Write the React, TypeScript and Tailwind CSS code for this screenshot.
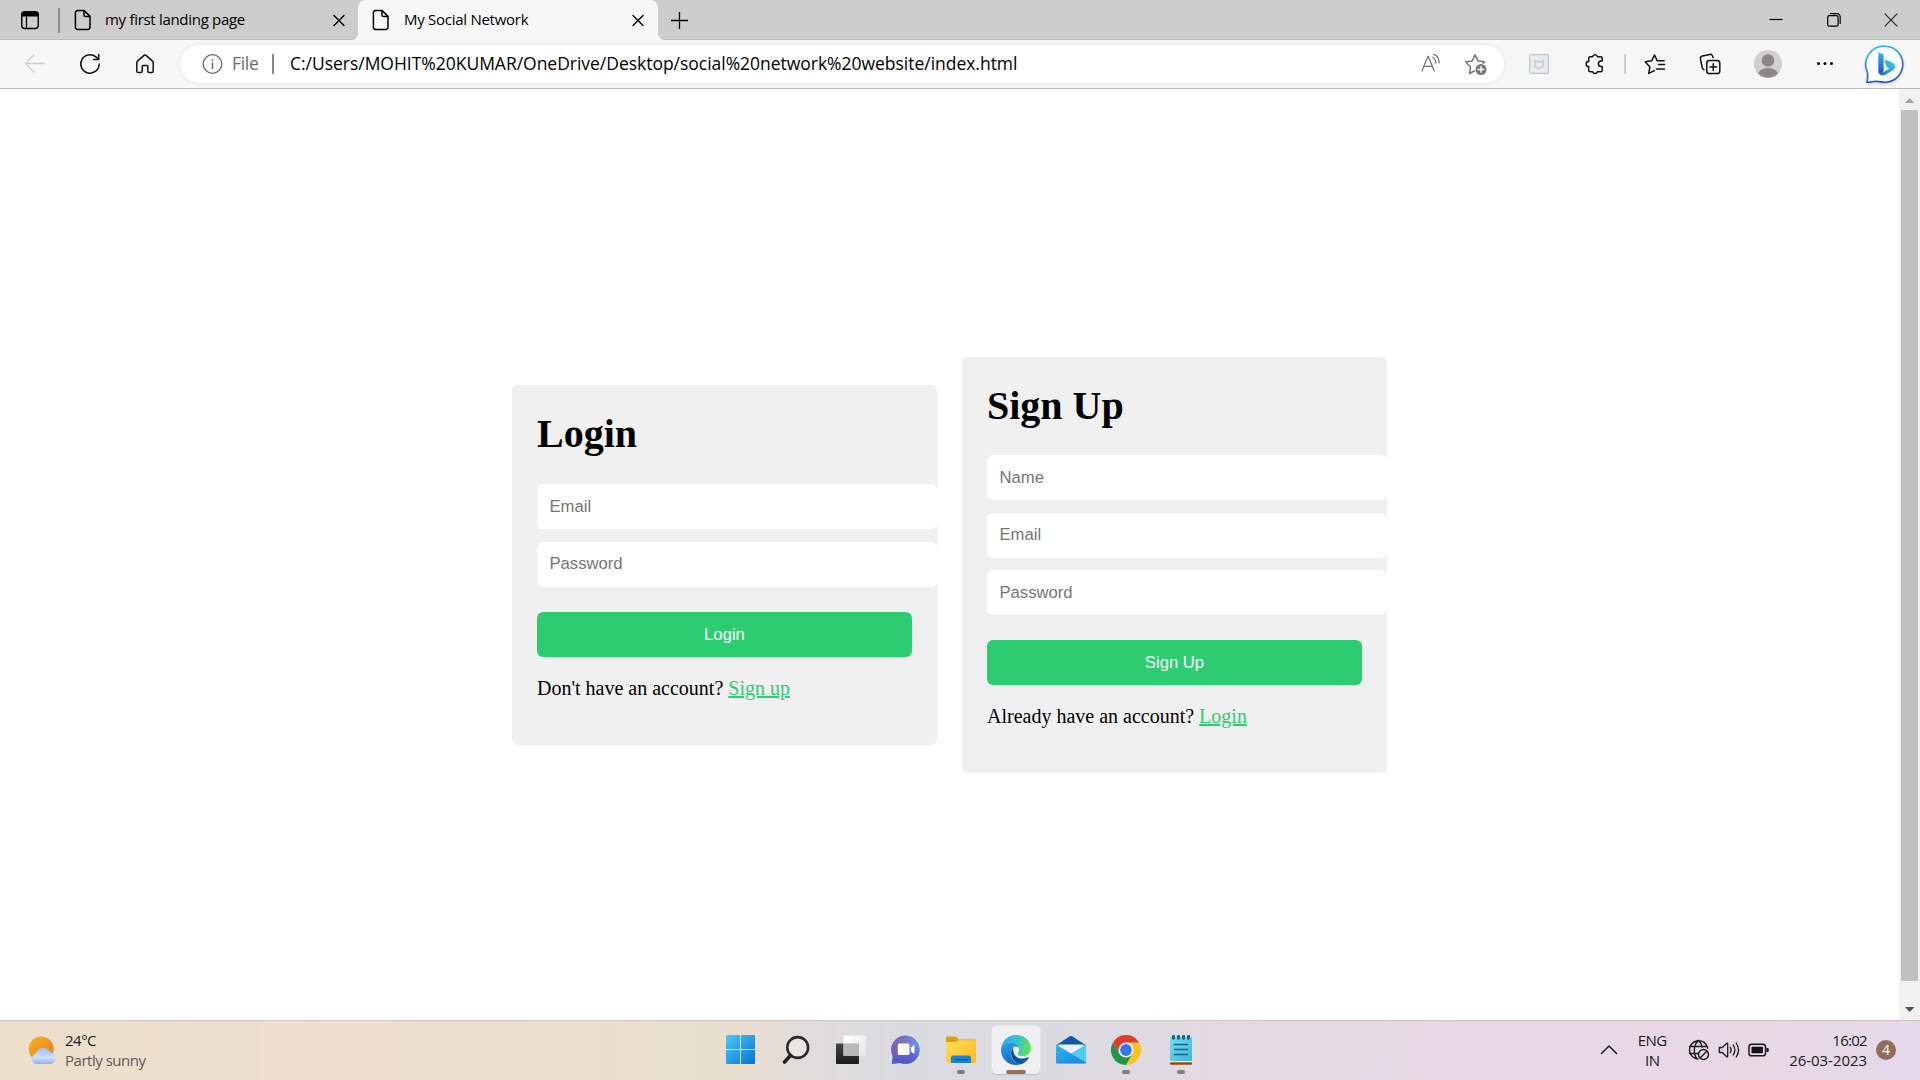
import React from 'react';

type IconProps = { className?: string };

const stroke = {
  fill: 'none',
  stroke: 'currentColor',
  strokeWidth: 1.5,
  strokeLinecap: 'round' as const,
  strokeLinejoin: 'round' as const,
};

function WorkspaceIcon() {
  return (
    <svg width="20" height="20" viewBox="0 0 20 20" className="shrink-0">
      <rect x="1.75" y="2" width="16.5" height="16.5" rx="3" {...stroke} strokeWidth={1.4} />
      <path d="M1.2 6.6V4.5a3.2 3.2 0 0 1 3.2-3.2h11.2a3.2 3.2 0 0 1 3.2 3.2v2.1z" fill="#000" />
      <path d="M6.5 6v12" {...stroke} strokeWidth={1.2} />
    </svg>
  );
}

function DocIcon() {
  return (
    <svg width="18" height="22" viewBox="0 0 18 22" className="shrink-0">
      <path d="M3.6 1.6h6.6l5.8 5.8v10.8a2.2 2.2 0 0 1-2.2 2.2H3.6a2.2 2.2 0 0 1-2.2-2.2V3.8a2.2 2.2 0 0 1 2.2-2.2z" {...stroke} />
      <path d="M10 1.8v4.4a1.4 1.4 0 0 0 1.4 1.4h4.4" {...stroke} />
    </svg>
  );
}

function CloseIcon({ className }: IconProps) {
  return (
    <svg width="14" height="14" viewBox="0 0 14 14" className={className}>
      <path d="M2 2.500l10 10M12 2.500L2 12.500" {...stroke} strokeWidth={1.4} />
    </svg>
  );
}

function Tab({ title, active, titleClassName }: { title: string; active?: boolean; titleClassName: string }) {
  return (
    <div
      className={
        active
          ? 'relative z-10 flex h-10 w-[300px] items-center rounded-t-lg bg-[#f7f7f7] pl-[14px] pr-[13px]'
          : 'flex h-10 w-[298px] items-center pl-[14px] pr-[12px]'
      }
    >
      {active && (
        <>
          <span className="absolute -left-[6px] bottom-0 size-[6px] bg-[radial-gradient(circle_at_0_0,transparent_5.5px,#f7f7f7_6px)]" />
          <span className="absolute -right-[6px] bottom-0 size-[6px] bg-[radial-gradient(circle_at_100%_0,transparent_5.5px,#f7f7f7_6px)]" />
        </>
      )}
      <DocIcon />
      <span className={'flex-1 whitespace-nowrap pb-[2px] text-[15px] leading-5 text-black ' + titleClassName}>{title}</span>
      <CloseIcon />
    </div>
  );
}

function TabBar() {
  return (
    <div className="flex h-10 shrink-0 items-center bg-[#cdcdcd] shadow-[inset_0_-1px_0_#bdbdbd]">
      <div className="ml-5 flex">
        <WorkspaceIcon />
      </div>
      <span className="ml-[18px] h-[25px] w-[2px] bg-[#8c8c8c]" />
      <Tab title="my first landing page" titleClassName="ml-[13px] tracking-[-0.3px]" />
      <Tab title="My Social Network" titleClassName="ml-[14px] tracking-[-0.27px]" active />
      <svg width="18" height="18" viewBox="0 0 18 18" className="ml-3 -mt-px">
        <path d="M9.5 1v17M1 9.5h17" stroke="#000" strokeWidth="1.3" />
      </svg>
      <div className="ml-auto flex items-center">
        <svg width="14" height="14" viewBox="0 0 14 14">
          <path d="M.5 6.5h13" stroke="#000" strokeWidth="1.2" />
        </svg>
        <svg width="14" height="14" viewBox="0 0 14 14" className="ml-[44px]">
          <rect x=".7" y="2.7" width="10.4" height="10.4" rx="1.6" fill="none" stroke="#000" strokeWidth="1.2" />
          <path d="M3 .7h7.2a3 3 0 0 1 3 3V11" fill="none" stroke="#000" strokeWidth="1.2" />
        </svg>
        <svg width="14" height="14" viewBox="0 0 14 14" className="ml-[43px] mr-[22px]">
          <path d="M.7.7l12.6 12.6M13.3.7L.7 13.3" stroke="#222" strokeWidth="1.1" />
        </svg>
      </div>
    </div>
  );
}

function BingIcon() {
  return (
    <svg width="42" height="42" viewBox="0 0 42 42" className="shrink-0 drop-shadow-[0_1px_1px_rgba(0,0,0,0.2)]">
      <defs>
        <linearGradient id="bingRing" x1="0" y1="0" x2="0.35" y2="1">
          <stop offset="0" stopColor="#2fc4f4" />
          <stop offset="0.5" stopColor="#2b8fe6" />
          <stop offset="1" stopColor="#1c4fc9" />
        </linearGradient>
        <linearGradient id="bingStem" x1="0" y1="0" x2="0" y2="1">
          <stop offset="0" stopColor="#35b5f2" />
          <stop offset="1" stopColor="#1b49cf" />
        </linearGradient>
        <linearGradient id="bingBowl" x1="1" y1="0" x2="0" y2="1">
          <stop offset="0" stopColor="#33d8e4" />
          <stop offset="0.5" stopColor="#2ba4ee" />
          <stop offset="1" stopColor="#1f56d8" />
        </linearGradient>
      </defs>
      <path
        d="M21 3.2a18 18 0 1 1-3.5 35.7c-3.6-.7-6.2-1-9.6-.2-1.9.5-3.6.6-4.9.4.6-2.7.9-6 .6-9.6A18.3 18.3 0 0 1 21 3.2z"
        fill="#fff"
        stroke="url(#bingRing)"
        strokeWidth="1.6"
      />
      <path d="M14.3 9.3l4.1 1.5c.8.3 1.2.9 1.2 1.7v15.7l-2.2 3.6c-1.9-.3-3.1-1.9-3.1-4z" fill="url(#bingStem)" />
      <path d="M22.2 17l6.5 2.7c2.6 1.2 3.2 4.6 1.2 6.9l-8 5c-3 1.8-6.4.5-7.4-2.6 1.3 1.2 3.3 1.1 5.1 0l5.7-3.6-1.6-.7c-.6-.3-.9-.7-1.1-1.3l-1.9-4.9c-.3-.9.6-1.9 1.5-1.5z" fill="url(#bingBowl)" />
    </svg>
  );
}

function Toolbar() {
  return (
    <div className="flex h-[49px] shrink-0 items-center border-b border-[#b9b9b9] bg-[#f7f7f7] text-[#111]">
      {/* navigation */}
      <svg width="24" height="24" viewBox="0 0 24 24" className="ml-[23px] text-[#cfcfcf]">
        <path d="M21.5 11.5H2.500M11 3L2.500 11.500l8.500 8.500" {...stroke} strokeWidth={1.3} />
      </svg>
      <svg width="24" height="24" viewBox="0 0 24 24" className="ml-[31px]">
        <path d="M21.2 12a9.200 9.200 0 1 1-3.300-7.100l2.600 2.400" {...stroke} />
        <path d="M20.7 2.500v5h-5" {...stroke} />
      </svg>
      <svg width="24" height="24" viewBox="0 0 24 24" className="ml-[31px]">
        <path d="M3.8 10.6a2 2 0 0 1 .7-1.500l6.200-5.500a2 2 0 0 1 2.600 0l6.200 5.500a2 2 0 0 1 .7 1.500v8.600a1.400 1.400 0 0 1-1.400 1.400h-2.600a1.400 1.400 0 0 1-1.400-1.400v-4.700a1 1 0 0 0-1-1h-3.600a1 1 0 0 0-1 1v4.700a1.400 1.400 0 0 1-1.400 1.400H5.200a1.400 1.400 0 0 1-1.400-1.400z" {...stroke} />
      </svg>

      {/* address bar */}
      <div className="ml-[23px] flex h-[38px] w-[1324px] items-center rounded-full bg-white shadow-[0_0_4px_rgba(0,0,0,0.09)]">
        <svg width="22" height="22" viewBox="0 0 22 22" className="ml-[21px] text-[#6e6e6e]">
          <circle cx="11.5" cy="11" r="9.3" {...stroke} strokeWidth={1.3} />
          <path d="M11.5 10v5.5" {...stroke} />
          <circle cx="11.5" cy="7" r="1" fill="currentColor" />
        </svg>
        <span className="ml-[9px] w-[30px] pb-[2px] text-[17.5px] leading-6 tracking-[-0.3px] text-[#6b6b6b]">File</span>
        <span className="ml-[10px] h-5 w-[2px] bg-[#8a8a8a]" />
        <span className="ml-[16px] whitespace-nowrap pb-[2px] text-[17.5px] leading-6 tracking-[-0.025px] text-black">
          C:/Users/MOHIT%20KUMAR/OneDrive/Desktop/social%20network%20website/index.html
        </span>
        <svg width="22" height="22" viewBox="0 0 22 22" className="ml-auto text-[#767676]">
          <path d="M2 18L7.800 3.500h.6L14.200 18M3.900 13.300h8.400" {...stroke} strokeWidth={1.3} />
          <path d="M12.800 4.200c1.700 1 3 3.200 2.900 5.800M14 1.300c3.200 1.500 5.300 4.800 5 8.700" {...stroke} strokeWidth={1.3} />
        </svg>
        <svg width="24" height="24" viewBox="0 0 24 24" className="ml-[22px] mr-[16px] text-[#767676]">
          <path d="M10.300 19l-4.800 2.500 1.100-6.500L1.700 9.800l6.500-.9 2.900-6 2.900 6 6.500.9-1.300 1.300" {...stroke} />
          <circle cx="17" cy="17.500" r="5.500" fill="currentColor" />
          <path d="M17 14.700v5.600M14.200 17.500h5.600" stroke="#fff" strokeWidth="1.4" strokeLinecap="round" />
        </svg>
      </div>

      {/* extensions */}
      <svg width="24" height="24" viewBox="0 0 24 24" className="ml-[23px]">
        <rect x="2.600" y="2.600" width="18.800" height="18.800" rx="1" fill="#e9ecee" stroke="#bcc5cb" strokeWidth="1.2" />
        <path d="M8 8.300l4 2 4-2v6.400l-4 2-4-2z" fill="none" stroke="#c9ced2" strokeWidth="1.7" />
      </svg>
      <svg width="24" height="24" viewBox="0 0 24 24" className="ml-[32px]">
        <path d="M9.700 4.700a2.400 2.400 0 0 1 4.700 0h3.300a1.500 1.500 0 0 1 1.500 1.500V9h-1a2.700 2.700 0 0 0 0 5.600h1v3.600a1.500 1.500 0 0 1-1.500 1.500h-3.300a2.400 2.400 0 0 1-4.700 0H7.200a1.500 1.500 0 0 1-1.500-1.500v-3.600a2.600 2.600 0 0 1 0-5.200V6.200a1.500 1.500 0 0 1 1.500-1.500z" {...stroke} />
      </svg>
      <span className="ml-[17px] h-5 w-[2px] bg-[#cfcfcf]" />
      <svg width="24" height="24" viewBox="0 0 24 24" className="ml-[17px]">
        <path d="M11.500 18.600l-5.800 2.800 1.200-6.500L2.200 9.700l6.400-.9L11.500 3l2.800 5.800h6.900M15.500 12.500h6M13.500 17h8" {...stroke} />
      </svg>
      <svg width="24" height="24" viewBox="0 0 24 24" className="ml-[31px]">
        <rect x="8.800" y="8.600" width="13" height="13" rx="2.600" {...stroke} />
        <path d="M15.300 11.800v6.600M12 15.100h6.600M6 17.800a3 3 0 0 1-1.800-2.300L2.400 6.900A2.600 2.600 0 0 1 4.400 4l7.400-1.600c1.700-.3 2.800.7 3.200 3.200" {...stroke} />
      </svg>
      <svg width="28" height="28" viewBox="0 0 28 28" className="ml-[32px]">
        <clipPath id="avatarClip"><circle cx="14" cy="14" r="13.800" /></clipPath>
        <circle cx="14" cy="14" r="14" fill="#d2d0ce" />
        <circle cx="14" cy="10.500" r="6.200" fill="#8a8886" />
        <ellipse cx="14" cy="25" rx="10.200" ry="7" fill="#8a8886" clipPath="url(#avatarClip)" />
      </svg>
      <svg width="24" height="24" viewBox="0 0 24 24" className="ml-[31px]">
        <circle cx="5.500" cy="11.500" r="1.500" /><circle cx="12" cy="11.500" r="1.500" /><circle cx="18.500" cy="11.500" r="1.500" />
      </svg>
      <div className="ml-[27px] flex"><BingIcon /></div>
    </div>
  );
}

type CardProps = {
  title: string;
  fields: string[];
  prompt: string;
  link: string;
  className: string;
  headingClassName: string;
};

function AuthCard({ title, fields, prompt, link, className, headingClassName }: CardProps) {
  return (
    <section className={'flex w-[425px] flex-col rounded-md bg-[#f0f0f0] px-[25px] pt-[26px] ' + className}>
      <h1 className={"whitespace-nowrap font-['Liberation_Serif',serif] text-[40px] font-bold leading-[46px] text-black " + headingClassName}>
        {title}
      </h1>
      <div className="flex flex-col gap-[12.5px]">
        {fields.map((f) => (
          <input
            key={f}
            placeholder={f}
            className="h-[45px] w-[400px] rounded-md bg-white px-[12.5px] font-['Liberation_Sans',sans-serif] text-[16.67px] text-black placeholder:text-[#757575] placeholder:opacity-100"
          />
        ))}
      </div>
      <button className="mt-[25px] h-[45px] w-[375px] shrink-0 rounded-md bg-[#2ecc71] font-['Liberation_Sans',sans-serif] text-[16.67px] text-white">
        {title}
      </button>
      <p className="mt-[20px] whitespace-nowrap font-['Liberation_Serif',serif] text-[20px] leading-[23px] text-black">
        {prompt}{' '}
        <a className="text-[#2ecc71] underline decoration-2">{link}</a>
      </p>
    </section>
  );
}

function Scrollbar() {
  return (
    <div className="flex w-[21px] shrink-0 flex-col items-center bg-[#f1f1f1]">
      <svg width="21" height="21" viewBox="0 0 21 21" className="shrink-0">
        <path d="M6 14h9.500L10.700 9z" fill="#a3a3a3" />
      </svg>
      <span className="w-[17px] flex-1 bg-[#c1c1c1]" />
      <svg width="21" height="39" viewBox="0 0 21 39" className="shrink-0">
        <path d="M6 26h9.500l-4.800 5z" fill="#505050" />
      </svg>
    </div>
  );
}

/* taskbar icons */

function StartIcon() {
  return (
    <svg width="30" height="30" viewBox="0 0 30 30">
      <defs>
        <linearGradient id="start" gradientUnits="userSpaceOnUse" x1="0" y1="0" x2="30" y2="30">
          <stop offset="0" stopColor="#4cc8fb" /><stop offset="1" stopColor="#0072d0" />
        </linearGradient>
      </defs>
      <path d="M0 1a1 1 0 0 1 1-1h13v14H0zM15 0h13a1 1 0 0 1 1 1v13H15zM0 15h14v14H1a1 1 0 0 1-1-1zM15 15h14v13a1 1 0 0 1-1 1H15z" fill="url(#start)" />
    </svg>
  );
}

function SearchIcon() {
  return (
    <svg width="30" height="30" viewBox="0 0 30 30">
      <circle cx="16.700" cy="12.500" r="10.400" fill="#f3efec" fillOpacity=".5" stroke="#2a2a2a" strokeWidth="2.6" />
      <path d="M9.500 20.500L3.500 27" stroke="#222" strokeWidth="3.6" strokeLinecap="round" />
    </svg>
  );
}

function TaskViewIcon() {
  return (
    <svg width="30" height="30" viewBox="0 0 30 30">
      <defs>
        <linearGradient id="tvDark" x1="0" y1="0" x2="0" y2="1"><stop offset="0" stopColor="#444" /><stop offset="1" stopColor="#1c1c1c" /></linearGradient>
        <linearGradient id="tvLight" x1="0" y1="0" x2="1" y2="1"><stop offset="0" stopColor="#fff" /><stop offset="1" stopColor="#e6e6e6" /></linearGradient>
      </defs>
      <rect x="0" y="8.500" width="23" height="20.500" rx="1" fill="url(#tvDark)" />
      <rect x="7.500" y=".5" width="22.300" height="20.500" rx="1" fill="url(#tvLight)" />
      <path d="M7.500 8.500H23V21H8.500a1 1 0 0 1-1-1z" fill="#b9b9b9" />
    </svg>
  );
}

function ChatIcon() {
  return (
    <svg width="30" height="30" viewBox="0 0 30 30">
      <defs>
        <linearGradient id="chat" x1="0" y1=".2" x2="1" y2=".4"><stop offset="0" stopColor="#8a5fa8" /><stop offset=".5" stopColor="#7378cc" /><stop offset="1" stopColor="#6d97e8" /></linearGradient>
        <linearGradient id="chatLow" x1="0" y1="0" x2="0" y2="1"><stop offset=".3" stopColor="#5656c8" stopOpacity="0" /><stop offset=".9" stopColor="#5558cc" /></linearGradient>
      </defs>
      <path d="M15 .5a14.200 14.200 0 1 1-5.800 27.400L.8 28.800l1-7.500A14.200 14.200 0 0 1 15 .5z" fill="url(#chat)" />
      <path d="M15 .5a14.200 14.200 0 1 1-5.800 27.400L.8 28.800l1-7.500A14.200 14.200 0 0 1 15 .5z" fill="url(#chatLow)" />
      <rect x="6.800" y="8.600" width="11.700" height="11.400" rx="1.600" fill="#fff" />
      <path d="M19.900 12.500l2.600-2.200c.5-.3 1 0 1 .5V18c0 .6-.5.800-1 .5l-2.600-2.200z" fill="#fff" />
    </svg>
  );
}

function FolderIcon() {
  return (
    <svg width="30" height="30" viewBox="0 0 30 30">
      <defs>
        <linearGradient id="folder" x1="0" y1="0" x2="1" y2="1"><stop offset="0" stopColor="#ffdd63" /><stop offset="1" stopColor="#fbb917" /></linearGradient>
      </defs>
      <path d="M0 3a1.500 1.500 0 0 1 1.500-1.500h8.200L13 4.600h15.500A1.500 1.500 0 0 1 30 6v6H0z" fill="#e0a00c" />
      <path d="M0 7h9.800l3-1.700H30V26.500a1.500 1.500 0 0 1-1.500 1.500h-27A1.500 1.500 0 0 1 0 26.500z" fill="url(#folder)" />
      <path d="M5 28v-5a2.500 2.500 0 0 1 2.500-2.500h15A2.500 2.500 0 0 1 25 23v5z" fill="#1683d8" />
      <path d="M9.500 24.600h11" stroke="#0b4f96" strokeWidth="1.3" strokeLinecap="round" />
    </svg>
  );
}

function EdgeIcon() {
  return (
    <svg width="30" height="30" viewBox="0 0 30 30">
      <defs>
        <linearGradient id="edgeTop" x1="0" y1=".4" x2="1" y2=".6">
          <stop offset="0" stopColor="#28a9e8" /><stop offset=".45" stopColor="#2fc4d8" /><stop offset="1" stopColor="#6ce04e" />
        </linearGradient>
        <linearGradient id="edgeSide" x1="0" y1="0" x2=".5" y2="1">
          <stop offset="0" stopColor="#2aa3ea" /><stop offset="1" stopColor="#0f6cc8" />
        </linearGradient>
        <linearGradient id="edgeLow" x1="0" y1="0" x2="1" y2="0">
          <stop offset="0" stopColor="#0b4a94" /><stop offset="1" stopColor="#125fb0" />
        </linearGradient>
      </defs>
      <path d="M0 14C.6 6.200 7 0 15 0c9 0 15 6.300 15 13.200 0 5-3.800 8-8.200 8-3.600 0-5.500-1.300-5.500-2.400 0-.8 1.700-1.500 1.700-4C18 11 14.500 7.600 9.500 7.600 5 7.600 1.500 10 0 14z" fill="url(#edgeTop)" />
      <path d="M0 14.800C.5 10.200 4.500 7.600 9.500 7.600c4.700 0 7.800 2.500 8.400 5.800-1-1.600-2.500-2.200-4-1.800-3 .8-4.500 4-4 7.800.7 5.200 4.600 9 9.800 9.900-1.500.5-3.100.7-4.700.7C6.500 30 0 23.500 0 14.800z" fill="url(#edgeSide)" />
      <path d="M12.500 12.200c-2.300 2-3 5.300-2 8.700 1.400 4.900 5 8 9.200 8.400 3.400-1 6.200-3.200 8-6.100.4-.6-.2-1.200-.8-.9-5 2.600-11.400 1.200-13.600-3-1.300-2.500-1.500-5.200-.8-7.100z" fill="url(#edgeLow)" />
    </svg>
  );
}

function MailIcon() {
  return (
    <svg width="30" height="30" viewBox="0 0 30 30">
      <defs>
        <linearGradient id="mail" x1="0" y1="0" x2="1" y2="1"><stop offset="0" stopColor="#2fb3ef" /><stop offset="1" stopColor="#1a86dc" /></linearGradient>
      </defs>
      <path d="M0 10.200L13.800 1.300a2.200 2.200 0 0 1 2.400 0L30 10.200z" fill="#0e5aa8" />
      <path d="M2 9.500h26L15 20z" fill="#f1f1f1" />
      <path d="M0 9.800l15 8.700 15-8.700V27.500a1 1 0 0 1-1 1H1a1 1 0 0 1-1-1z" fill="#4ccbf8" />
      <path d="M0 9.800L30 27.500a1 1 0 0 1-1 1H1a1 1 0 0 1-1-1z" fill="url(#mail)" />
    </svg>
  );
}

function ChromeIcon() {
  return (
    <svg width="30" height="30" viewBox="0 0 30 30">
      <path d="M28 7.500a15 15 0 0 1-13 22.500l6.500-11.200L15 7.500z" fill="#fcc21b" />
      <path d="M2 7.500l6.500 11.300L21.500 18.800 15 30A15 15 0 0 1 2 7.500z" fill="#21974a" />
      <path d="M15 7.500H28a15 15 0 0 0-26 0l6.500 11.300z" fill="#e33b2e" />
      <circle cx="15" cy="15" r="7.500" fill="#fff" />
      <circle cx="15" cy="15" r="5.900" fill="#3577ee" />
    </svg>
  );
}

function NotepadIcon() {
  return (
    <svg width="24" height="30" viewBox="0 0 24 30">
      <defs>
        <linearGradient id="note" x1="0" y1="0" x2="1" y2="1"><stop offset="0" stopColor="#7fdcf0" /><stop offset="1" stopColor="#3fb4d8" /></linearGradient>
      </defs>
      <rect x="1" y="24" width="22" height="4" fill="#f0f0f0" />
      <rect x="1" y="27.300" width="22" height="2.400" rx=".8" fill="#9a4c10" />
      <rect x="1" y="2" width="22" height="24" rx="1" fill="url(#note)" />
      <path d="M5.500 9.500h13M5.500 14.500h13M5.500 19.500h13" stroke="#0e6a8c" strokeWidth="1.7" strokeLinecap="round" />
      <path d="M4.500 1.300v2M9.500 1.300v2M14.500 1.300v2M19.500 1.300v2" stroke="#0e6a8c" strokeWidth="3" strokeLinecap="round" />
    </svg>
  );
}

function WeatherIcon() {
  return (
    <svg width="30" height="30" viewBox="0 0 30 30">
      <defs>
        <linearGradient id="sun" x1="0" y1="0" x2="1" y2="1"><stop offset="0" stopColor="#f1b62c" /><stop offset="1" stopColor="#f07410" /></linearGradient>
        <linearGradient id="cloud" x1="0" y1="0" x2="0" y2="1"><stop offset="0" stopColor="#9dbcf2" /><stop offset=".6" stopColor="#cfe0fb" /><stop offset="1" stopColor="#8fb0ee" /></linearGradient>
      </defs>
      <circle cx="13.200" cy="14" r="12.500" fill="url(#sun)" />
      <path d="M8.500 29a5.400 5.400 0 0 1-.7-10.500 7.800 7.800 0 0 1 14.500-1.200A5.900 5.900 0 0 1 22.500 29z" fill="url(#cloud)" />
    </svg>
  );
}

function TaskSlot({ children, state }: { children: React.ReactNode; state?: 'running' | 'active' }) {
  return (
    <div className="flex w-[55px] justify-center">
      <div
        className={
          state === 'active'
            ? 'relative flex size-12 items-center justify-center rounded-[5px] bg-[#f0eff2] shadow-[0_0_0_1px_rgba(255,255,255,0.3),0_1px_1px_rgba(0,0,0,0.25)]'
            : 'relative flex size-12 items-center justify-center'
        }
      >
        {children}
        {state === 'active' && <span className="absolute bottom-0 left-[14px] h-1 w-5 rounded-full bg-[#95735f]" />}
        {state === 'running' && <span className="absolute bottom-0 left-5 h-1 w-2 rounded-full bg-[#7f7b80]" />}
      </div>
    </div>
  );
}

function Taskbar() {
  return (
    <footer className="flex h-[60px] shrink-0 items-center border-t border-[#d0c8c4] bg-[linear-gradient(90deg,#ecdfcc_0%,#ebdfcd_11%,#f0dfcf_16%,#ebdfce_25%,#e8decf_38%,#e0dcd9_42%,#dadbe1_47%,#dedae1_60%,#e5d9e3_66%,#e8d7e5_80%,#e9d7e4_92%,#e4d9ec_100%)] pb-px text-[15px] leading-5 text-[#1b1b1b]">
      <div className="flex w-[713px] shrink-0 items-center">
        <div className="ml-[28px]"><WeatherIcon /></div>
        <div className="ml-[7px] pb-px">
          <div className="tracking-[-0.5px]">24°C</div>
          <div className="tracking-[-0.48px] text-[#5f5a55]">Partly sunny</div>
        </div>
      </div>
      <div className="flex">
        <TaskSlot><StartIcon /></TaskSlot>
        <TaskSlot><SearchIcon /></TaskSlot>
        <TaskSlot><TaskViewIcon /></TaskSlot>
        <TaskSlot><ChatIcon /></TaskSlot>
        <TaskSlot state="running"><FolderIcon /></TaskSlot>
        <TaskSlot state="active"><EdgeIcon /></TaskSlot>
        <TaskSlot><MailIcon /></TaskSlot>
        <TaskSlot state="running"><ChromeIcon /></TaskSlot>
        <TaskSlot state="running"><NotepadIcon /></TaskSlot>
      </div>
      <div className="ml-auto flex items-center">
        <svg width="18" height="12" viewBox="0 0 18 12" className="mr-[19px]">
          <path d="M1.500 9.500L9 2l7.500 7.500" {...stroke} />
        </svg>
        <div className="w-[30px] pb-px text-center tracking-[-0.6px]">
          <div>ENG</div>
          <div>IN</div>
        </div>
        <svg width="22" height="22" viewBox="0 0 22 22" className="ml-[21px]">
          <path d="M10 20A9.200 9.200 0 1 1 19.700 9M1.500 7.500h17.500M1.500 14.500h8M10.500 1.500C5.200 6 5.200 15 9 20M10.500 1.500c2 1.800 3.300 4 3.700 6.500" {...stroke} strokeWidth={1.4} />
          <circle cx="15.500" cy="15.500" r="5" {...stroke} strokeWidth={1.4} />
          <path d="M12.300 18.700l6.400-6.400" {...stroke} strokeWidth={1.4} />
        </svg>
        <svg width="22" height="20" viewBox="0 0 22 20" className="ml-[8px]">
          <path d="M1.300 7.500h3l4.500-4.200c.4-.3.900-.1.900.4v12.600c0 .5-.5.700-.9.400l-4.500-4.200h-3z" {...stroke} strokeWidth={1.3} />
          <path d="M12.300 7.300c1 1.600 1 3.800 0 5.400M15.200 5c2 3 2 7 0 10M18.200 3c2.800 4.200 2.800 9.800 0 14" {...stroke} strokeWidth={1.3} />
        </svg>
        <svg width="22" height="14" viewBox="0 0 22 14" className="ml-[8px]">
          <rect x="1" y="1.200" width="16.500" height="11.600" rx="2.600" {...stroke} />
          <rect x="3.500" y="3.700" width="11.500" height="6.600" rx=".8" fill="#111" />
          <path d="M18.500 5h1.200a1 1 0 0 1 1 1v2a1 1 0 0 1-1 1h-1.200z" fill="#111" />
        </svg>
        <div className="ml-[19px] pb-px text-right">
          <div className="tracking-[-0.7px]">16:02</div>
          <div className="tracking-[-0.05px]">26-03-2023</div>
        </div>
        <span className="ml-[9px] mr-6 flex size-5 items-center justify-center rounded-full bg-[#8e6f5c] text-[14px] text-white">4</span>
      </div>
    </footer>
  );
}

export default function App() {
  return (
    <div className="flex h-[1080px] w-[1920px] flex-col overflow-hidden bg-white font-['Open_Sans',sans-serif]">
      <TabBar />
      <Toolbar />
      <div className="flex min-h-0 flex-1">
        <main className="flex min-w-0 flex-1 items-center justify-center gap-[25px] pt-[21px]">
          <AuthCard
            title="Login"
            fields={['Email', 'Password']}
            prompt="Don't have an account?"
            link="Sign up"
            className="h-[360px]"
            headingClassName="mb-[27.2px]"
          />
          <AuthCard
            title="Sign Up"
            fields={['Name', 'Email', 'Password']}
            prompt="Already have an account?"
            link="Login"
            className="h-[416px]"
            headingClassName="mb-[26.2px]"
          />
        </main>
        <Scrollbar />
      </div>
      <Taskbar />
    </div>
  );
}
